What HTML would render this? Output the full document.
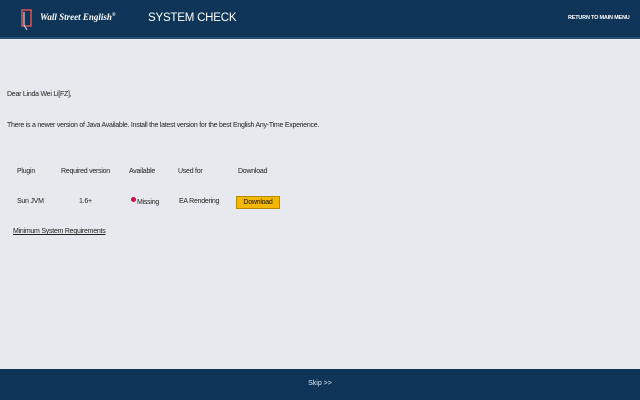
<!DOCTYPE html>
<html><head><style>
body{margin:0;width:640px;height:400px;background:#e8e9ee;font-family:"Liberation Sans",sans-serif;position:relative;overflow:hidden;color:#222}
.hdr{position:absolute;top:0;left:0;width:640px;height:37px;background:#0e3557;border-bottom:2px solid #2a4f6e}
.ftr{position:absolute;top:369px;left:0;width:640px;height:31px;background:#0e3557;color:#dfe6f0;font-size:7px;text-align:center;line-height:30px}
.t{position:absolute;font-size:7px;white-space:nowrap;letter-spacing:-0.25px}
</style></head><body>
<div class="hdr">
<svg style="position:absolute;left:21px;top:8px" width="12" height="24" viewBox="0 0 12 24"><rect x="1" y="2" width="9" height="16" fill="none" stroke="#e05050" stroke-width="1.5"/><path d="M3 4v13l3 5" fill="none" stroke="#c9d3e0" stroke-width="1.2"/></svg>
<div style="position:absolute;left:40px;top:12px;color:#fff;font:italic bold 9px 'Liberation Serif',serif">Wall Street English<sup style="font-size:5px">®</sup></div>
<div style="position:absolute;left:148px;top:12px;color:#fff;font-size:11.5px;letter-spacing:-0.2px">SYSTEM CHECK</div>
<div style="position:absolute;left:568px;top:15px;color:#fff;font-size:5.5px;font-weight:bold;letter-spacing:-0.2px">RETURN TO MAIN MENU</div>
</div>
<div class="t" style="left:7px;top:91px">Dear Linda Wei Li[FZ],</div>
<div class="t" style="left:7px;top:122px">There is a newer version of Java Available. Install the latest version for the best English Any-Time Experience.</div>
<div class="t" style="left:17px;top:168px">Plugin</div>
<div class="t" style="left:61px;top:168px">Required version</div>
<div class="t" style="left:129px;top:168px">Available</div>
<div class="t" style="left:178px;top:168px">Used for</div>
<div class="t" style="left:238px;top:168px">Download</div>
<div class="t" style="left:17px;top:198px">Sun JVM</div>
<div class="t" style="left:79px;top:198px">1.6+</div>
<div style="position:absolute;left:131px;top:197px;width:5px;height:5px;border-radius:50%;background:#d0104a"></div>
<div class="t" style="left:137px;top:199px">Missing</div>
<div class="t" style="left:179px;top:198px">EA Rendering</div>
<div style="position:absolute;left:236px;top:196px;width:44px;height:13px;background:#f4b800;border:1px solid #b88a00;font-size:7px;letter-spacing:-0.25px;color:#111;text-align:center;line-height:12px;box-sizing:border-box">Download</div>
<div class="t" style="left:13px;top:228px;text-decoration:underline">Minimum System Requirements</div>
<div class="ftr">Skip &gt;&gt;</div>
</body></html>
